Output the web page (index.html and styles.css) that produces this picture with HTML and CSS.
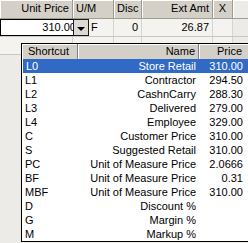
FILE: index.html
```html
<!DOCTYPE html>
<html lang="en">
<head>
    <meta charset="UTF-8">
    <title>Price Level Lookup</title>
    <link rel="stylesheet" href="styles.css">
</head>
<body>
    <div class="grid">
        <div class="head">
            <div class="hc c-price right">Unit Price</div>
            <div class="hc c-um">U/M</div>
            <div class="hc c-disc">Disc</div>
            <div class="hc c-ext right">Ext Amt</div>
            <div class="hc c-x center">X</div>
            <div class="hc c-fill"></div>
        </div>
        <div class="row">
            <div class="cell c-price edit"><span class="val">310.00</span><span class="drop"><span class="arrow"></span></span></div>
            <div class="cell c-um um">F</div>
            <div class="cell c-disc right">0</div>
            <div class="cell c-ext right">26.87</div>
            <div class="cell c-x"></div>
            <div class="cell c-fill"></div>
        </div>
        <div class="row part">
            <div class="cell c-price"></div>
            <div class="cell c-um um"></div>
            <div class="cell c-disc"></div>
            <div class="cell c-ext"></div>
            <div class="cell c-x"></div>
            <div class="cell c-fill"></div>
        </div>

        <div class="popup">
            <div class="phead">
                <div class="ph p-code">Shortcut</div>
                <div class="ph p-name right">Name</div>
                <div class="ph p-price right">Price</div>
            </div>
            <div class="prow selected"><span class="p-code">L0</span><span class="p-name">Store Retail</span><span class="p-price">310.00</span></div>
            <div class="prow"><span class="p-code">L1</span><span class="p-name">Contractor</span><span class="p-price">294.50</span></div>
            <div class="prow"><span class="p-code">L2</span><span class="p-name">CashnCarry</span><span class="p-price">288.30</span></div>
            <div class="prow"><span class="p-code">L3</span><span class="p-name">Delivered</span><span class="p-price">279.00</span></div>
            <div class="prow"><span class="p-code">L4</span><span class="p-name">Employee</span><span class="p-price">329.00</span></div>
            <div class="prow"><span class="p-code">C</span><span class="p-name">Customer Price</span><span class="p-price">310.00</span></div>
            <div class="prow"><span class="p-code">S</span><span class="p-name">Suggested Retail</span><span class="p-price">310.00</span></div>
            <div class="prow"><span class="p-code">PC</span><span class="p-name">Unit of Measure Price</span><span class="p-price">2.0666</span></div>
            <div class="prow"><span class="p-code">BF</span><span class="p-name">Unit of Measure Price</span><span class="p-price">0.31</span></div>
            <div class="prow"><span class="p-code">MBF</span><span class="p-name">Unit of Measure Price</span><span class="p-price">310.00</span></div>
            <div class="prow"><span class="p-code">D</span><span class="p-name">Discount %</span><span class="p-price"></span></div>
            <div class="prow"><span class="p-code">G</span><span class="p-name">Margin %</span><span class="p-price"></span></div>
            <div class="prow"><span class="p-code">M</span><span class="p-name">Markup %</span><span class="p-price"></span></div>
        </div>
    </div>
</body>
</html>
```

FILE: styles.css
```css
body {
    margin: 0;
    padding: 0;
    font-family: 'Liberation Sans', Arial, sans-serif;
    font-size: 11px;
    color: #000;
    background: #ecebe7;
}
.grid {
    position: relative;
    width: 248px;
    height: 243px;
    overflow: hidden;
    background: #ecebe7;
}
.head {
    display: flex;
    height: 18px;
    background: #d4d0c8;
    border-bottom: 1px solid #a09d96;
}
.hc {
    box-sizing: border-box;
    height: 18px;
    line-height: 17px;
    padding: 0 3px;
    border-right: 1px solid #9d9a93;
    box-shadow: inset 1px 1px 0 #fff;
    white-space: nowrap;
}
.row {
    display: flex;
    height: 17px;
    border-bottom: 1px solid #c9c7c1;
}
.cell {
    box-sizing: border-box;
    height: 17px;
    line-height: 16px;
    padding: 0 3px;
    border-right: 1px solid #d6d4ce;
    background: #f4f3ef;
    white-space: nowrap;
}
.c-price { width: 73px; }
.c-um { width: 41px; }
.c-disc { width: 28px; }
.c-ext { width: 71px; }
.c-x { width: 20px; }
.c-fill { flex: 1; background: #ecebe7; border-right: none; }
.right { text-align: right; }
.center { text-align: center; }
.um { padding-left: 18px; }

.edit {
    position: relative;
    background: #fff;
    border: 1px solid #000;
    border-right: none;
    padding-right: 0;
    text-align: right;
    line-height: 15px;
    overflow: visible;
}
.val { margin-right: -3px; }
.drop {
    position: absolute;
    top: -1px;
    right: -16px;
    width: 16px;
    height: 17px;
    box-sizing: border-box;
    background: #dcdad4;
    border: 1px solid #1a1a1a;
}
.arrow {
    position: absolute;
    left: 3px;
    top: 7px;
    width: 0;
    height: 0;
    border-left: 4px solid transparent;
    border-right: 4px solid transparent;
    border-top: 4px solid #000;
}

.popup {
    position: absolute;
    left: 21px;
    top: 43px;
    width: 236px;
    border: 1px solid #000;
    background: #fff;
}
.phead {
    display: flex;
    height: 15px;
    background: #d4d0c8;
}
.ph {
    box-sizing: border-box;
    height: 15px;
    line-height: 15px;
    border-right: 1px solid #808080;
    box-shadow: inset 1px 1px 0 #fff;
    white-space: nowrap;
}
.p-code {
    box-sizing: border-box;
    width: 56px;
    padding-left: 3px;
}
.phead .p-code { padding-left: 6px; }
.p-name {
    box-sizing: border-box;
    width: 121px;
    padding-right: 3px;
    text-align: right;
}
.p-price {
    box-sizing: border-box;
    width: 57px;
    padding-right: 13px;
    text-align: right;
}
.prow {
    display: flex;
    height: 14px;
    line-height: 14px;
    white-space: nowrap;
}
.prow span { overflow: hidden; }
.prow.selected {
    background: #316ac5;
    color: #fff;
    margin-left: 1px;
}
.prow.selected .p-code { width: 55px; }
```
